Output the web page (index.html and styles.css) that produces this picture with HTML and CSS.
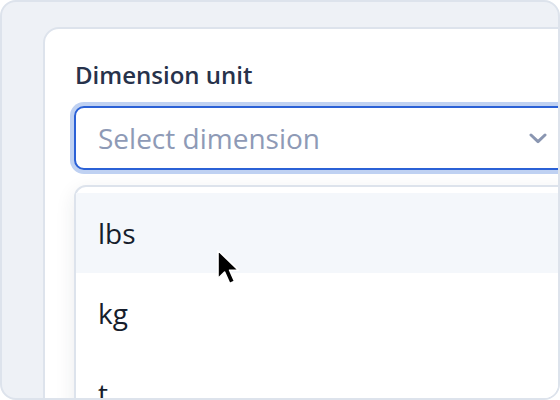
FILE: index.html
```html
<!DOCTYPE html>
<html lang="en">
<head>
<meta charset="utf-8">
<title>Dimension unit</title>
<link rel="stylesheet" href="styles.css">
</head>
<body>
<div class="frame">
  <div class="card">
    <label class="label">Dimension unit</label>
    <div class="select">
      <span class="placeholder">Select dimension</span>
      <svg class="chevron" width="18" height="11" viewBox="0 0 18 11" aria-hidden="true">
        <path d="M2 2 L9 8.6 L16 2" fill="none" stroke="#8a96b1" stroke-width="3" stroke-linecap="round" stroke-linejoin="round"/>
      </svg>
    </div>
    <ul class="menu">
      <li class="item active">lbs</li>
      <li class="item">kg</li>
      <li class="item">t</li>
    </ul>
  </div>
  <svg class="cursor" width="26" height="38" viewBox="0 0 26 38" aria-hidden="true">
    <path d="M2 1.5 L2 29.5 L8.6 23 L13.6 34.4 L18.6 32.3 L13.6 21.2 L22.4 21.2 Z" fill="#000" stroke="#fff" stroke-width="1.6" stroke-linejoin="round"/>
  </svg>
</div>
</body>
</html>
```
FILE: styles.css
```css
html, body {
  margin: 0;
  padding: 0;
  background: #ffffff;
}

.frame {
  position: relative;
  box-sizing: border-box;
  width: 560px;
  height: 400px;
  border: 2px solid #dde3ec;
  border-radius: 16px;
  background: #eef1f6;
  overflow: hidden;
  padding: 25px 0 0 41px;
  font-family: "Open Sans", "Noto Sans", sans-serif;
}

.card {
  box-sizing: border-box;
  width: 560px;
  height: 420px;
  background: #ffffff;
  border: 2px solid #dde3ec;
  border-top-left-radius: 16px;
  padding: 30px 29px 0 29px;
  display: flex;
  flex-direction: column;
}

.label {
  display: block;
  font-size: 24px;
  line-height: 32px;
  font-weight: 600;
  color: #27324b;
  margin: 0 0 15px 1px;
}

.select {
  box-sizing: border-box;
  height: 64px;
  border: 2px solid #2b61d6;
  border-radius: 10px;
  box-shadow: 0 0 0 4px #bfd1f2;
  display: flex;
  align-items: center;
  justify-content: space-between;
  padding: 0 23px 0 22px;
  background: #ffffff;
}

.placeholder {
  font-size: 28px;
  color: #8e9ab6;
  line-height: 38px;
}

.chevron {
  display: block;
}

.menu {
  list-style: none;
  margin: 15px 0 0 0;
  padding: 6px 0;
  border: 2px solid #dde3ec;
  border-radius: 12px;
  background: #ffffff;
  box-shadow: 0 6px 20px rgba(30, 41, 59, 0.09);
}

.item {
  height: 80px;
  display: flex;
  align-items: center;
  padding-left: 22px;
  font-size: 28px;
  color: #161d2c;
}

.item.active {
  background: #f4f7fb;
}

.cursor {
  position: absolute;
  left: 214px;
  top: 247px;
}
```
